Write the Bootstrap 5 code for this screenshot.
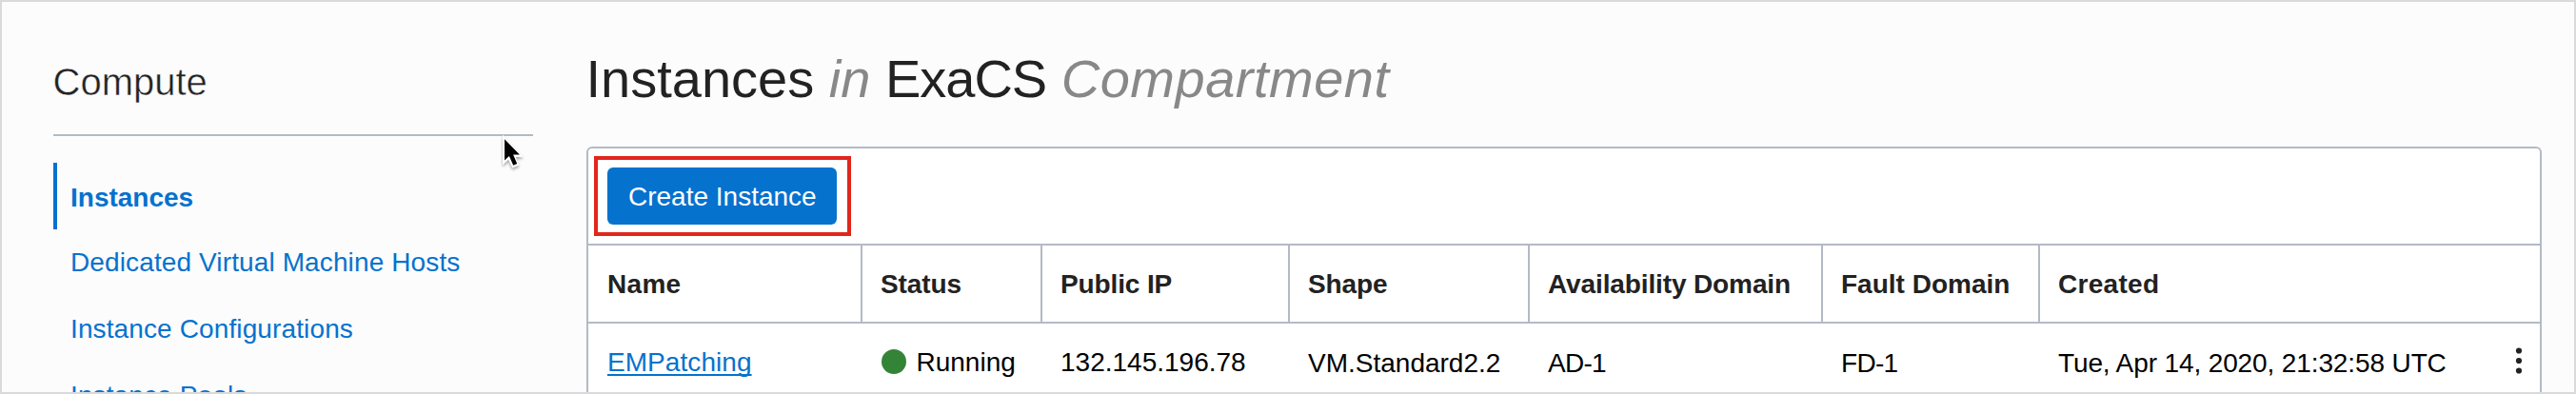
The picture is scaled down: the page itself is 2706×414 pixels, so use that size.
<!DOCTYPE html>
<html lang="en">
<head>
<meta charset="utf-8">
<title>Compute - Instances</title>
<link href="https://cdn.jsdelivr.net/npm/bootstrap@5.3.0/dist/css/bootstrap.min.css" rel="stylesheet">
<style>
  :root { --line: #b3bac5; --link: #0572ce; --ink: #222; --page: #fcfcfc; }
  body { font-family: "Liberation Sans", Arial, sans-serif; font-size: 28px; color: #000; background: var(--page); }
  .frame { height: 414px; border: 2px solid #dadada; padding: 0 34px 0 54px; gap: 56px; }
  .side { width: 504px; }
  .side-title { height: 141px; padding-top: 54px; font-size: 40px; line-height: 61px; font-weight: 400; text-indent: -.5px;
    color: var(--ink); border-bottom: 2px solid var(--line); -webkit-text-stroke: .5px var(--page); }
  .side-nav { margin-top: 28px; }
  .side-nav .nav-link { height: 70px; flex: none; padding: 0 0 0 18px; line-height: 73px; color: var(--link); letter-spacing: .12px; }
  .side-nav .nav-link.active { border-left: 4px solid var(--link); padding-left: 14px; font-weight: 700; margin-bottom: -2px; letter-spacing: 0; }
  .page-title { height: 152px; padding-top: 47px; font-size: 56px; line-height: 67px; font-weight: 400; color: var(--ink); white-space: nowrap; text-indent: -.5px; }
  .page-title em { color: #888; }
  .page-title .scope { letter-spacing: -1px; }
  .page-title .kind { letter-spacing: .5px; }
  .panel { border: 2px solid var(--line); border-bottom: 0; border-radius: 6px 6px 0 0; background: #fff; }
  .toolbar { height: 102px; padding: 20px; border-bottom: 2px solid var(--line); }
  .btn-create { width: 241px; height: 60px; padding: 0 0 0 22px; border: 0; border-radius: 6px; font-size: 28px; line-height: 61px; background: var(--link); color: #fff; }
  .callout { top: -12px; bottom: -12px; left: -14px; right: -15px; border: 4px solid #e1261c; }
  .grid-table { table-layout: fixed; border-collapse: separate; border-spacing: 0; line-height: 69px; white-space: nowrap; }
  .grid-table > :not(caption) > * > * { height: 82px; padding: 6px 0 0 19px; background: none; border: 0; vertical-align: top; box-shadow: none; color: #000; }
  .grid-table > :not(caption) > * > :first-child { padding-left: 20px; }
  .grid-table > thead > tr > th { border-bottom: 2px solid var(--line); border-right: 2px solid var(--line); color: var(--ink); font-weight: 700; }
  .grid-table > thead > tr > th:last-child { border-right: 0; }
  .grid-table > tbody > tr > td.low { padding-top: 7px; }
  .grid-table a { color: var(--link); letter-spacing: .06px; text-decoration: underline 2px; text-underline-offset: 3px; text-decoration-skip-ink: none; }
  .dot { width: 26px; height: 26px; margin: 21px 0 0 1px; background: #348437; }
  .status { gap: 10.5px; }
  .tight { letter-spacing: -.12px; }
  .tighter { letter-spacing: -.7px; }
  .loose { letter-spacing: .3px; }
  .kebab { margin: 18px 18px 0 0; }
  .pointer { left: 524px; top: 138px; filter: drop-shadow(0 2px 1.5px rgba(0,0,0,.35)); }
</style>
</head>
<body class="m-0 overflow-hidden">
<div class="frame d-flex overflow-hidden">
  <aside class="side flex-shrink-0">
    <h2 class="side-title m-0">Compute</h2>
    <nav class="side-nav nav flex-column flex-nowrap">
      <a class="nav-link active" href="#">Instances</a>
      <a class="nav-link" href="#">Dedicated Virtual Machine Hosts</a>
      <a class="nav-link" href="#">Instance Configurations</a>
      <a class="nav-link" href="#">Instance Pools</a>
    </nav>
  </aside>
  <main class="flex-grow-1 d-flex flex-column">
    <h1 class="page-title m-0 flex-shrink-0">Instances <em>in</em> <span class="scope">ExaCS</span> <em class="kind">Compartment</em></h1>
    <section class="panel flex-grow-1">
      <div class="toolbar d-flex">
        <div class="position-relative">
          <button type="button" class="btn btn-create text-start">Create Instance</button>
          <div class="callout position-absolute"></div>
        </div>
      </div>
      <table class="table grid-table m-0">
        <colgroup><col style="width:288px"><col style="width:189px"><col style="width:260px"><col style="width:252px"><col style="width:308px"><col style="width:228px"><col style="width:525px"></colgroup>
        <thead>
          <tr><th class="loose">Name</th><th class="tight">Status</th><th class="tight">Public IP</th><th class="tight">Shape</th><th class="tight">Availability Domain</th><th>Fault Domain</th><th class="loose">Created</th></tr>
        </thead>
        <tbody>
          <tr>
            <td><a href="#">EMPatching</a></td>
            <td><div class="status d-flex align-items-start"><span class="dot rounded-circle"></span>Running</div></td>
            <td>132.145.196.78</td>
            <td class="low">VM.Standard2.2</td>
            <td class="low tighter">AD-1</td>
            <td class="low tighter">FD-1</td>
            <td class="low tight"><div class="d-flex justify-content-between align-items-start">Tue, Apr 14, 2020, 21:32:58 UTC
              <svg class="kebab" width="8" height="28" viewBox="0 0 8 28" fill="#222"><circle cx="4" cy="3.5" r="3.1"/><circle cx="4" cy="14" r="3.1"/><circle cx="4" cy="24.5" r="3.1"/></svg></div></td>
          </tr>
        </tbody>
      </table>
    </section>
  </main>
</div>
<svg class="pointer position-absolute" width="28" height="42" viewBox="0 0 28 42">
  <path d="M4 3.5V35.5L10 29.8L14.3 38.6L21.3 35.4L17.8 27H25.6Z" fill="#fff"/>
  <path d="M6 8.3V30.5L10.9 26L15.2 35.8L19.2 34.1L15.1 24.4H21.9Z" fill="#000"/>
</svg>
<script src="https://cdn.jsdelivr.net/npm/bootstrap@5.3.0/dist/js/bootstrap.bundle.min.js"></script>
</body>
</html>
